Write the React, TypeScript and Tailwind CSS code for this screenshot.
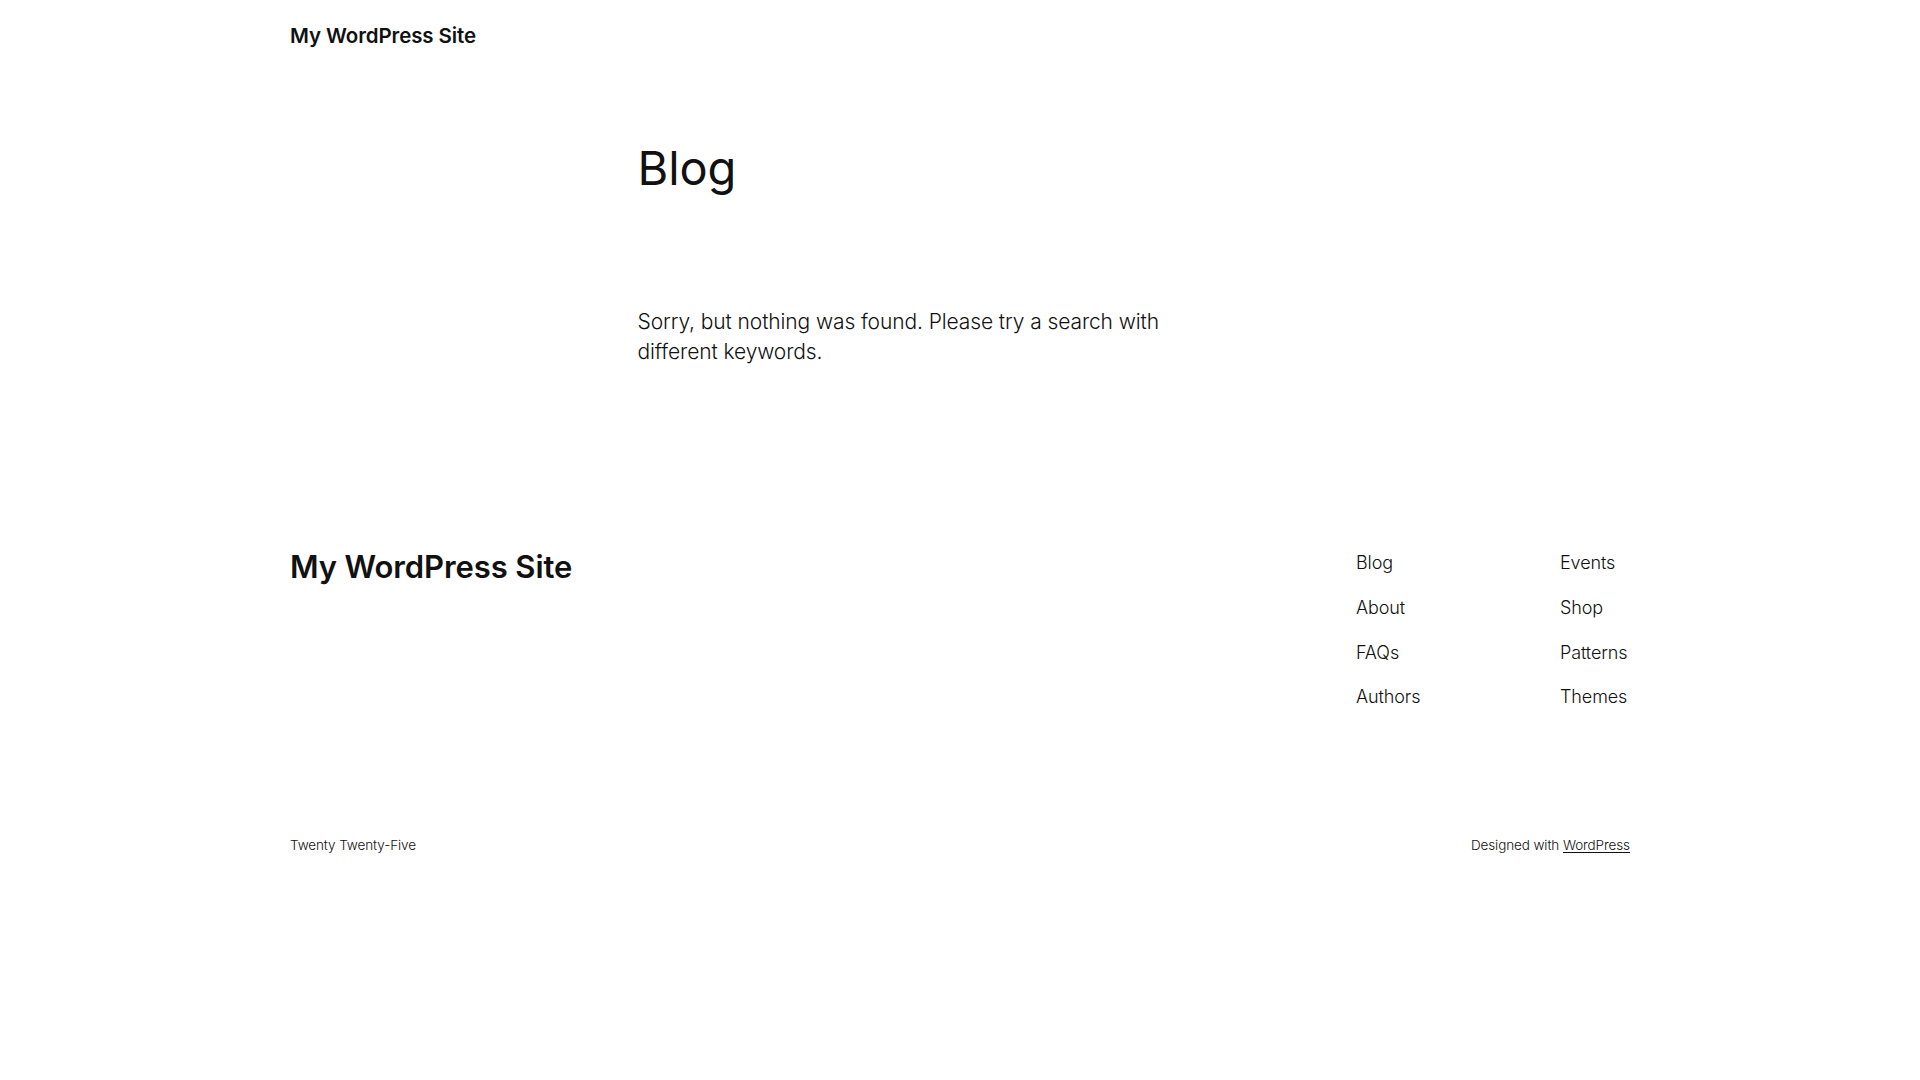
const navLeft = ['Blog', 'About', 'FAQs', 'Authors']
const navRight = ['Events', 'Shop', 'Patterns', 'Themes']

function NavColumn({ items }: { items: string[] }) {
  return (
    <ul className="flex flex-col gap-[19.5px] whitespace-nowrap">
      {items.map((item) => (
        <li key={item}>
          <a href="#" className="text-[18px] leading-[1.4] font-light text-[#111111]">
            {item}
          </a>
        </li>
      ))}
    </ul>
  )
}

export default function App() {
  return (
    <div className="min-h-[1080px] bg-white text-[#111111] font-['Inter',sans-serif] tracking-[-0.1px]">
      <div className="mx-auto w-[1340px]">
        <header className="pt-[22px]">
          <a href="#" className="text-[20.5px] leading-[1.4] font-semibold">
            My WordPress Site
          </a>
        </header>

        <main className="mx-auto mt-[89px] w-[645px]">
          <h1 className="text-[47px] leading-[1.2] font-normal">Blog</h1>
          <p className="mt-[110.5px] max-w-[540px] text-[21px] leading-[1.47] font-light">
            Sorry, but nothing was found. Please try a search with different keywords.
          </p>
        </main>

        <footer className="mt-[180px]">
          <div className="flex items-start justify-between">
            <a href="#" className="text-[31px] leading-[1.2] font-semibold">
              My WordPress Site
            </a>
            <nav className="flex pt-[2px]">
              <div className="w-[204px]">
                <NavColumn items={navLeft} />
              </div>
              <div className="w-[70px]">
                <NavColumn items={navRight} />
              </div>
            </nav>
          </div>
          <div className="mt-[126px] flex items-center justify-between text-[13.5px] leading-[1.4] font-light">
            <p>Twenty Twenty-Five</p>
            <p>
              Designed with{' '}
              <a href="#" className="underline underline-offset-2">
                WordPress
              </a>
            </p>
          </div>
        </footer>
      </div>
    </div>
  )
}
